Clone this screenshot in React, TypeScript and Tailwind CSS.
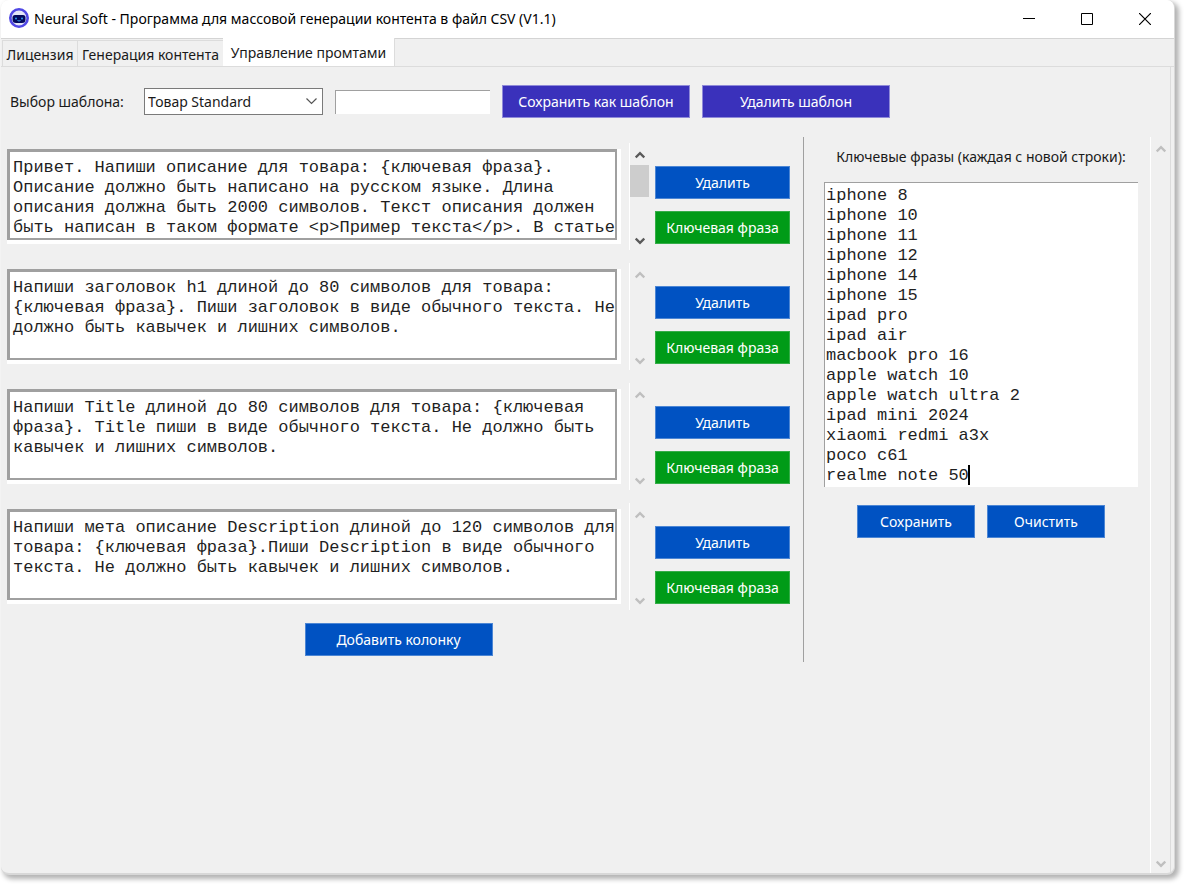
import { useState } from "react";

const defaultPrompts = [
    "Привет. Напиши описание для товара: {ключевая фраза}.\nОписание должно быть написано на русском языке. Длина\nописания должна быть 2000 символов. Текст описания должен\nбыть написан в таком формате <p>Пример текста</p>. В статье",
    "Напиши заголовок h1 длиной до 80 символов для товара:\n{ключевая фраза}. Пиши заголовок в виде обычного текста. Не\nдолжно быть кавычек и лишних символов.",
    "Напиши Title длиной до 80 символов для товара: {ключевая\nфраза}. Title пиши в виде обычного текста. Не должно быть\nкавычек и лишних символов.",
    "Напиши мета описание Description длиной до 120 символов для\nтовара: {ключевая фраза}.Пиши Description в виде обычного\nтекста. Не должно быть кавычек и лишних символов.",
];

const defaultKeywords = [
    "iphone 8",
    "iphone 10",
    "iphone 11",
    "iphone 12",
    "iphone 14",
    "iphone 15",
    "ipad pro",
    "ipad air",
    "macbook pro 16",
    "apple watch 10",
    "apple watch ultra 2",
    "ipad mini 2024",
    "xiaomi redmi a3x",
    "poco c61",
    "realme note 50",
].join("\n");

const monoFont = "font-['Liberation_Mono',monospace] text-[17px] leading-5";

function Logo() {
    return (
        <svg width="22" height="22" viewBox="0 0 22 22" aria-hidden="true">
            <circle cx="11" cy="10" r="8.7" fill="#e4e6f8" stroke="#5048e5" strokeWidth="2.6" />
            <path d="M4.5 9.5Q4.5 7 7 7h8q2.500 0 2.500 2.500v2q0 3.500-3.500 3.500H8q-3.500 0-3.500-3.500z" fill="#03095c" />
            <circle cx="8" cy="10.500" r="1" fill="#2f9ff0" />
            <circle cx="14" cy="10.500" r="1" fill="#2f9ff0" />
            <path d="M9.500 12.500q1.500 1 3 0" fill="none" stroke="#2f9ff0" strokeWidth="1" />
        </svg>
    );
}

function Arrow({ up, active }: { up?: boolean; active?: boolean }) {
    return (
        <svg width="10" height="8" viewBox="0 0 10 8" fill="none" aria-hidden="true">
            <path
                d={up ? "M.7 6.500 5 2.200 9.300 6.500" : "M.7 1.500 5 5.800 9.300 1.500"}
                stroke={active ? "#5a5a5a" : "#bfbfbf"}
                strokeWidth="2.4"
            />
        </svg>
    );
}

interface ScrollBarProps {
    active?: boolean;
    className: string;
}

function ScrollBar({ active, className }: ScrollBarProps) {
    return (
        <div className={`flex w-5 shrink-0 flex-col items-center border-l border-white pt-2 pb-[5px] ${className}`}>
            <button aria-label="Вверх"><Arrow up active={active} /></button>
            {active && <div className="mt-1.5 h-8 w-full bg-[#cdcdcd]" />}
            <button aria-label="Вниз" className="mt-auto"><Arrow active={active} /></button>
        </div>
    );
}

interface ActionButtonProps {
    label: string;
    className: string;
    onClick?: () => void;
}

function ActionButton({ label, className, onClick }: ActionButtonProps) {
    return (
        <button onClick={onClick} className={`h-[33px] shrink-0 whitespace-nowrap border text-white ${className}`}>
            {label}
        </button>
    );
}

const blue = "border-[#4c86d4] bg-[#0052c2]";
const green = "border-[#34ad48] bg-[#009b17]";
const violet = "border-[#8f8ad8] bg-[#3a31bb]";

interface PromptRowProps {
    index: number;
    value: string;
    onChange: (value: string) => void;
    onDelete: () => void;
}

function PromptRow({ index, value, onChange, onDelete }: PromptRowProps) {
    return (
        <div className="flex h-[107px] items-center">
            <div className="h-[95px] min-w-0 flex-1 border-b-4 border-r-4 border-white">
                <div className="h-full border-2 border-t-[3px] border-l-[3px] border-[#a0a0a0]">
                    <textarea
                        aria-label={`Промт ${index + 1}`}
                        value={value}
                        onChange={(e) => onChange(e.target.value)}
                        className={`block h-full w-full resize-none overflow-hidden whitespace-pre bg-white pt-1.5 pl-[3px] text-[#1f1f1f] outline-none ${monoFont}`}
                    />
                </div>
            </div>
            <ScrollBar active={index === 0} className="ml-2 h-full" />
            <div className="ml-1.5 flex w-[135px] flex-col gap-3 self-end pb-1.5">
                <ActionButton label="Удалить" className={blue} onClick={onDelete} />
                <ActionButton label="Ключевая фраза" className={green} onClick={() => onChange(value + "{ключевая фраза}")} />
            </div>
        </div>
    );
}

export default function App() {
    const [prompts, setPrompts] = useState(defaultPrompts);
    const [keywords, setKeywords] = useState(defaultKeywords);
    const [templateName, setTemplateName] = useState("");

    const updatePrompt = (index: number, value: string) => {
        setPrompts(prompts.map((p, i) => (i === index ? value : p)));
    };

    return (
        <div className="h-screen min-h-[680px] bg-white pr-[9px] pb-[10px] pl-px font-['Noto_Sans','Open_Sans',sans-serif] text-sm text-[#1a1a1a]">
            <div className="flex h-full flex-col overflow-hidden rounded-lg border-r border-b-2 border-[#d8d8d8] bg-[#f0f0f0] shadow-[3px_3px_5px_1px_rgba(0,0,0,0.3)]">
                <header className="flex h-[39px] shrink-0 items-center border-b border-[#d4d4d4] bg-white pl-[7px] text-black">
                    <Logo />
                    <h1 className="ml-1 flex-1 whitespace-nowrap">
                        Neural Soft - Программа для массовой генерации контента в файл CSV (V1.1)
                    </h1>
                    <div className="flex items-center gap-[46px] pr-[23px]">
                        <button aria-label="Свернуть">
                            <svg width="12" height="12" viewBox="0 0 12 12"><path d="M0 5.500h12" stroke="#000" /></svg>
                        </button>
                        <button aria-label="Развернуть">
                            <svg width="12" height="12" viewBox="0 0 12 12"><path d="M.5.5h11v11H.5z" fill="none" stroke="#000" /></svg>
                        </button>
                        <button aria-label="Закрыть">
                            <svg width="12" height="12" viewBox="0 0 12 12"><path d="m0 0 12 12M12 0 0 12" stroke="#000" strokeWidth="1.2" /></svg>
                        </button>
                    </div>
                </header>

                <nav role="tablist" className="flex h-7 shrink-0 items-end border-b border-[#dcdcdc] pl-px">
                    <button role="tab" aria-selected="false" className="h-[26px] w-[75px] whitespace-nowrap border-t border-l border-[#dcdcdc] pt-0.5">Лицензия</button>
                    <button role="tab" aria-selected="false" className="h-[26px] w-[146px] whitespace-nowrap border-t border-l border-[#dcdcdc] pt-0.5">Генерация контента</button>
                    <button role="tab" aria-selected="true" className="h-7 w-[172px] whitespace-nowrap border-r border-[#dcdcdc] bg-white pt-0.5">Управление промтами</button>
                </nav>

                <main className="mr-[3px] flex min-h-0 flex-1 flex-col border-r border-[#dcdcdc] pt-[18px]">
                    <div className="flex items-center pl-[9px]">
                        <label htmlFor="template" className="w-[134px]">Выбор шаблона:</label>
                        <div className="relative">
                            <select id="template" className="h-[27px] w-[179px] appearance-none border border-[#7a7a7a] bg-white pl-[3px] outline-none">
                                <option>Товар Standard</option>
                            </select>
                            <svg className="pointer-events-none absolute top-2.5 right-1.5" width="11" height="7" viewBox="0 0 11 7" fill="none" aria-hidden="true">
                                <path d="m.5.5 5 5 5-5" stroke="#555" strokeWidth="1.2" />
                            </svg>
                        </div>
                        <input
                            type="text"
                            aria-label="Название шаблона"
                            value={templateName}
                            onChange={(e) => setTemplateName(e.target.value)}
                            className="ml-3 h-6 w-[155px] border-t border-l border-[#a0a0a0] bg-white px-1 outline-none"
                        />
                        <ActionButton label="Сохранить как шаблон" className={`ml-3 w-[188px] ${violet}`} />
                        <ActionButton label="Удалить шаблон" className={`ml-3 w-[188px] ${violet}`} />
                    </div>

                    <div className="mt-[19px] flex min-h-0 flex-1">
                        <section className="min-w-0 flex-1 pt-1.5 pl-1.5">
                            <div className="flex flex-col gap-[13px]">
                                {prompts.map((prompt, i) => (
                                    <PromptRow
                                        key={i}
                                        index={i}
                                        value={prompt}
                                        onChange={(value) => updatePrompt(i, value)}
                                        onDelete={() => setPrompts(prompts.filter((_, j) => j !== i))}
                                    />
                                ))}
                            </div>
                            <div className="mt-[13px] flex justify-center">
                                <ActionButton label="Добавить колонку" className={`w-[188px] ${blue}`} onClick={() => setPrompts([...prompts, ""])} />
                            </div>
                        </section>

                        <section className="ml-[13px] h-[525px] w-[347px] shrink-0 border-l border-[#a0a0a0] pt-2.5 pr-3 pl-5">
                            <label htmlFor="keywords" className="block whitespace-nowrap text-center">
                                Ключевые фразы (каждая с новой строки):
                            </label>
                            <div className="relative mt-[15px]">
                                <textarea
                                    id="keywords"
                                    rows={15}
                                    value={keywords}
                                    onChange={(e) => setKeywords(e.target.value)}
                                    className={`block h-[305px] w-full resize-none overflow-hidden whitespace-pre border-t border-l border-[#a0a0a0] bg-white pt-[3px] pl-px text-[#1f1f1f] outline-none ${monoFont}`}
                                />
                                {/* text caret */}
                                <span className="absolute bottom-0.5 left-36 h-5 w-0.5 bg-black" />
                            </div>
                            <div className="mt-[18px] flex justify-center gap-3">
                                <ActionButton label="Сохранить" className={`w-[118px] ${blue}`} />
                                <ActionButton label="Очистить" className={`w-[118px] ${blue}`} onClick={() => setKeywords("")} />
                            </div>
                        </section>

                        <ScrollBar className="" />
                    </div>
                </main>
            </div>
        </div>
    );
}
